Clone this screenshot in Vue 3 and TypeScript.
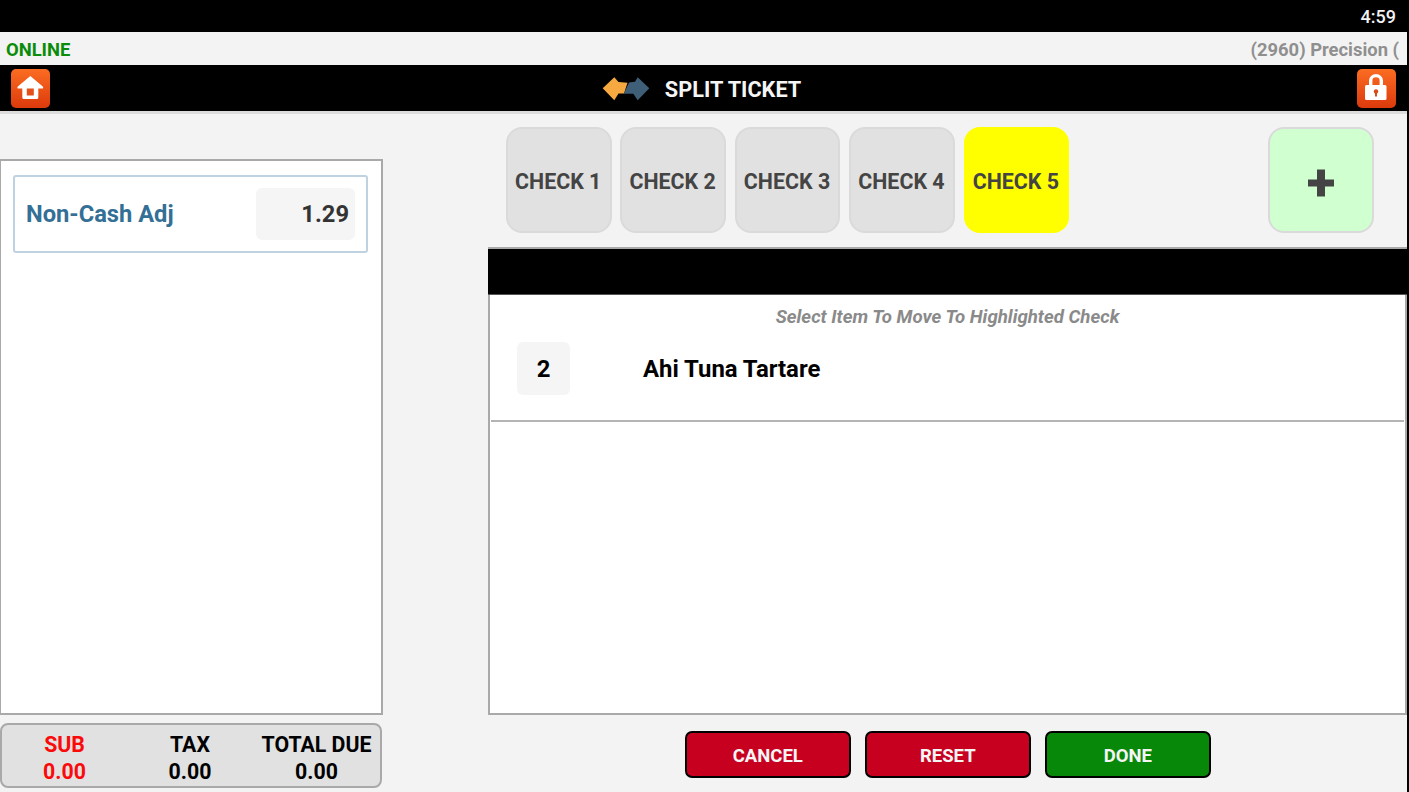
<script setup lang="ts">
const checks = [
  { label: 'CHECK 1', active: false },
  { label: 'CHECK 2', active: false },
  { label: 'CHECK 3', active: false },
  { label: 'CHECK 4', active: false },
  { label: 'CHECK 5', active: true },
]
const totals = [
  { label: 'SUB', value: '0.00', red: true },
  { label: 'TAX', value: '0.00', red: false },
  { label: 'TOTAL DUE', value: '0.00', red: false },
]
</script>

<template>
  <div class="screen">
    <div class="content">
      <div class="status"><span>4:59</span></div>
      <div class="online">
        <span class="online-text">ONLINE</span>
        <span class="terminal">(2960) Precision (</span>
      </div>
      <div class="nav">
        <button class="icon-btn">
          <svg width="39" height="39" viewBox="0 0 39 39">
            <path d="M19.3 7 L6.8 17.6 Q5.6 19.6 7.6 19.6 H11.3 V28.5 Q11.3 30 12.8 30 H25.8 Q27.3 30 27.3 28.5 V19.6 H31 Q33 19.6 31.8 17.6 Z" fill="#fff" />
            <rect x="15.8" y="19.5" width="7" height="7" fill="#e4501a" />
          </svg>
        </button>
        <div class="title">
          <svg class="arrows" width="48" height="26" viewBox="0 0 48 26">
            <path d="M0.7 12.3 L12.3 1.2 L16.5 6 L25.5 6.8 L22 17.5 H16.5 L12.3 24.2 Z" fill="#f7a941" />
            <path d="M47.3 12.3 L35.7 1.2 L33 5.8 L27 6.5 L21.8 17.7 H31.3 L35.7 24.2 Z" fill="#3f5f78" />
          </svg>
          <span>SPLIT TICKET</span>
        </div>
        <button class="icon-btn">
          <svg width="39" height="39" viewBox="0 0 39 39">
            <path d="M12 17 V11.5 A7 6.5 0 0 1 26 11.5 V17 H22.6 V11.5 A3.6 3.2 0 0 0 15.4 11.5 V17 Z" fill="#fff" />
            <rect x="8" y="16" width="21.5" height="15" rx="1.5" fill="#fff" />
            <circle cx="19" cy="22.5" r="2.2" fill="#d94a16" />
            <rect x="18" y="22.5" width="2" height="5" fill="#d94a16" />
          </svg>
        </button>
      </div>

      <div class="main">
        <aside class="left">
          <div class="ticket">
            <div class="adj">
              <span class="adj-label">Non-Cash Adj</span>
              <span class="adj-value">1.29</span>
            </div>
          </div>
          <div class="totals">
            <div v-for="t in totals" :key="t.label" class="total" :class="{ red: t.red }">
              <span>{{ t.label }}</span>
              <span>{{ t.value }}</span>
            </div>
          </div>
        </aside>

        <section class="right">
          <div class="tabs">
            <button v-for="c in checks" :key="c.label" class="tab" :class="{ active: c.active }">{{ c.label }}</button>
            <button class="tab add">
              <svg width="28" height="28" viewBox="0 0 28 28">
                <path d="M10 0.5 H18 V10.5 H27 V17.5 H18 V27.5 H10 V17.5 H1 V10.5 H10 Z" fill="#444" />
              </svg>
            </button>
          </div>
          <div class="panel">
            <div class="panel-head"></div>
            <p class="hint">Select Item To Move To Highlighted Check</p>
            <div class="item">
              <span class="qty">2</span>
              <span class="name">Ahi Tuna Tartare</span>
            </div>
          </div>
          <div class="actions">
            <button class="action danger">CANCEL</button>
            <button class="action danger">RESET</button>
            <button class="action ok">DONE</button>
          </div>
        </section>
      </div>
    </div>
  </div>
</template>

<style>
html, body { margin: 0; background: #000; }
</style>

<style scoped>
.screen {
  width: 1409px;
  height: 792px;
  overflow: hidden;
  background: #000;
  font-family: Roboto, "Liberation Sans", sans-serif;
  padding-right: 2px;
  box-sizing: border-box;
}
.content {
  height: 100%;
  background: #f3f3f3;
  display: flex;
  flex-direction: column;
}
button {
  font-family: inherit;
  padding: 0;
  box-sizing: border-box;
}
.status {
  height: 32px;
  flex: none;
  background: #000;
  color: #f2f2f2;
  font-size: 18px;
  font-weight: 500;
  display: flex;
  align-items: center;
  justify-content: flex-end;
  padding-right: 13px;
  margin-right: -2px;
  box-sizing: border-box;
}
.online {
  height: 33px;
  flex: none;
  display: flex;
  align-items: center;
  justify-content: space-between;
  padding: 1px 8px 0 6px;
  box-sizing: border-box;
  font-size: 18.4px;
  font-weight: 700;
}
.online-text { color: #0a8c0a; }
.terminal { color: #8f8f8f; }
.nav {
  height: 49px;
  flex: none;
  background: #000;
  border-bottom: 3px solid #dcdcdc;
  box-sizing: border-box;
  display: flex;
  align-items: center;
  justify-content: space-between;
  padding: 0 11px 0 10.5px;
}
.icon-btn {
  width: 39px;
  height: 39px;
  border: none;
  border-radius: 5px;
  background: linear-gradient(#fb6c22, #dc3a0c);
  display: flex;
  align-items: center;
  justify-content: center;
}
.title {
  display: flex;
  align-items: center;
  gap: 15px;
  color: #f5f5f5;
  font-size: 21.7px;
  font-weight: 700;
  margin-right: 3.4px;
  padding-top: 3px;
}
.arrows {
  margin-top: -2px;
}
.main {
  flex: 1;
  display: flex;
  min-height: 0;
}
.left {
  width: 383px;
  flex: none;
  display: flex;
  flex-direction: column;
  padding-top: 45px;
  box-sizing: border-box;
}
.ticket {
  height: 556px;
  flex: none;
  background: #fff;
  border: 2px solid #a9a9a9;
  border-left-width: 1px;
  box-sizing: border-box;
  padding: 14px 13px 0 12px;
}
.adj {
  height: 78px;
  border: 2px solid #bfd2e1;
  border-radius: 3px;
  box-sizing: border-box;
  display: flex;
  align-items: center;
  justify-content: space-between;
  padding: 0 11px;
}
.adj-label {
  color: #346f96;
  font-size: 23.7px;
  font-weight: 700;
}
.adj-value {
  width: 99px;
  height: 52px;
  background: #f5f5f5;
  border-radius: 6px;
  display: flex;
  align-items: center;
  justify-content: flex-end;
  padding-right: 6px;
  box-sizing: border-box;
  color: #333;
  font-size: 23.7px;
  font-weight: 700;
}
.totals {
  margin-top: 8px;
  width: 382px;
  height: 65px;
  padding-top: 5px;
  background: #e1e1e1;
  border: 2px solid #a9a9a9;
  border-radius: 8px;
  box-sizing: border-box;
  display: grid;
  grid-template-columns: 125px 126px 1fr;
  align-items: center;
  font-size: 21.3px;
  font-weight: 700;
  color: #000;
}
.total {
  display: flex;
  flex-direction: column;
  align-items: center;
  line-height: 27px;
}
.total.red { color: #fa0a0a; }
.right {
  width: 919px;
  flex: none;
  margin-left: 105px;
  padding-top: 13px;
  box-sizing: border-box;
  display: flex;
  flex-direction: column;
}
.tabs {
  height: 107px;
  flex: none;
  padding-left: 18px;
  display: flex;
  gap: 8.9px;
}
.tab {
  width: 105.5px;
  height: 106px;
  padding: 2px 1px 0 0;
  background: #e1e1e1;
  border: 2px solid #dadada;
  border-radius: 16px;
  color: #444;
  font-size: 21.4px;
  font-weight: 700;
  white-space: nowrap;
  display: flex;
  align-items: center;
  justify-content: center;
}
.tab.active {
  background: #ffff00;
  border-color: #ffff00;
}
.tab.add {
  background: #d0ffd0;
  width: 106px;
  margin-left: auto;
  margin-right: 33px;
  padding: 6px 0 0;
}
.panel {
  margin-top: 13px;
  height: 468px;
  flex: none;
  background: #fff;
  border: 2px solid #a9a9a9;
  box-sizing: border-box;
}
.panel-head {
  height: 45px;
  margin: 0 -2px;
  background: #000;
  border-bottom: 1px solid #555;
}
.hint {
  margin: 12px 0 0;
  text-align: center;
  color: #8a8a8a;
  font-size: 18.65px;
  font-weight: 700;
  font-style: italic;
  line-height: 21px;
}
.item {
  margin: 14px 1px 0;
  height: 80px;
  border-bottom: 2px solid #b4b4b4;
  box-sizing: border-box;
  display: flex;
  align-items: flex-start;
  padding-left: 26px;
}
.qty {
  width: 53px;
  height: 53px;
  background: #f5f5f5;
  border-radius: 6px;
  display: flex;
  align-items: center;
  justify-content: center;
  font-size: 23.9px;
  font-weight: 700;
  color: #000;
}
.name {
  margin-left: 73px;
  height: 53px;
  display: flex;
  align-items: center;
  font-size: 23.9px;
  font-weight: 700;
  color: #000;
}
.actions {
  margin-top: 16px;
  padding-left: 197px;
  display: flex;
  gap: 14.5px;
}
.action {
  width: 165.5px;
  height: 47px;
  padding-top: 2px;
  border: 2px solid #000;
  border-radius: 7px;
  color: #f5f5f5;
  font-size: 18.5px;
  font-weight: 700;
}
.action.danger { background: #c80020; }
.action.ok { background: #088808; }
</style>
